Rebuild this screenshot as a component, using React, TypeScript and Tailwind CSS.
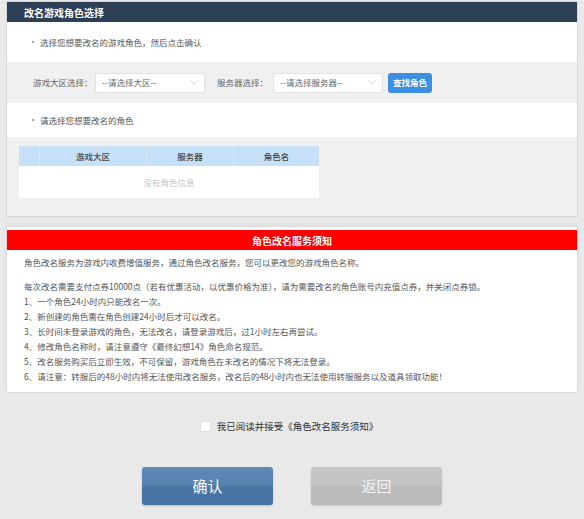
const NOTICE_ITEMS = [
  '1、一个角色24小时内只能改名一次。',
  '2、新创建的角色需在角色创建24小时后才可以改名。',
  '3、长时间未登录游戏的角色，无法改名，请登录游戏后，过1小时左右再尝试。',
  '4、修改角色名称时，请注意遵守《最终幻想14》角色命名规范。',
  '5、改名服务购买后立即生效，不可保留，游戏角色在未改名的情况下将无法登录。',
  '6、请注意：转服后的48小时内将无法使用改名服务，改名后的48小时内也无法使用转服服务以及道具领取功能！',
]

function Bullet({ children }: { children: React.ReactNode }) {
  return (
    <div className="flex items-center gap-[6px] pl-[25px] text-[8.5px] text-[#555]">
      <span className="w-[2px] h-[2px] rounded-full bg-[#888]" />
      <span>{children}</span>
    </div>
  )
}

function Select({ placeholder }: { placeholder: string }) {
  return (
    <div className="w-[110px] h-[20px] bg-white border border-[#e2e2e2] rounded-[2px] flex items-center justify-between px-[6px] text-[8.5px] text-[#666]">
      <span>{placeholder}</span>
      <svg width="8" height="5" viewBox="0 0 8 5" fill="none">
        <path d="M0.5 0.5L4 4L7.5 0.5" stroke="#c8c8c8" strokeWidth="0.8" />
      </svg>
    </div>
  )
}

export default function App() {
  return (
    <div className="min-h-[519px] bg-[#e9e9e9] px-[6px] pt-[1px] font-['Noto_Sans_CJK_SC','Noto_Sans',sans-serif]">
      {/* role selection */}
      <div className="border border-[#d6d6d6] bg-white">
        <div className="h-[20px] bg-[#2c3f55] flex items-center pl-[17px] text-[10px] font-bold text-white">
          改名游戏角色选择
        </div>
        <div className="h-[40px] flex items-center">
          <Bullet>选择您想要改名的游戏角色，然后点击确认</Bullet>
        </div>
        <div className="h-[41px] bg-[#f0f0f0] flex items-center pl-[26px] text-[8.5px] text-[#666]">
          <span className="w-[62px]">游戏大区选择：</span>
          <Select placeholder="--请选择大区--" />
          <span className="ml-[12px] w-[56px]">服务器选择：</span>
          <Select placeholder="--请选择服务器--" />
          <button className="ml-[5px] h-[20px] px-[5px] rounded-[3px] bg-[#3c8fe2] text-white text-[8.5px] font-bold">
            查找角色
          </button>
        </div>
        <div className="h-[34px] flex items-center">
          <Bullet>请选择您想要改名的角色</Bullet>
        </div>
        <div className="bg-[#f0f0f0] pt-[9px] pb-[18px] pl-[12px]">
          <div className="w-[300px] bg-white">
            <div className="h-[20px] bg-[#c6e0f8] grid grid-cols-[21px_107px_87px_85px] text-[8.5px] font-medium text-[#444]">
              <div className="border-r border-[#d6e8f8]" />
              <div className="flex items-center justify-center border-r border-[#d6e8f8]">游戏大区</div>
              <div className="flex items-center justify-center border-r border-[#d6e8f8]">服务器</div>
              <div className="flex items-center justify-center">角色名</div>
            </div>
            <div className="h-[32px] flex items-center justify-center text-[8.5px] text-[#c4c4c4]">没有角色信息</div>
          </div>
        </div>
      </div>

      {/* notice */}
      <div className="mt-[9px] border border-[#dcdcdc] bg-white pt-[3px] shadow-[0_-2px_4px_rgba(0,0,0,0.04)]">
        <div className="h-[20px] bg-[#ff0000] flex items-center justify-center text-[10px] font-bold text-white">
          角色改名服务须知
        </div>
        <div className="pt-[5px] pb-[8px] pl-[17px] text-[8.5px] leading-[15px] text-[#555]">
          <p className="mb-[9px]">角色改名服务为游戏内收费增值服务，通过角色改名服务，您可以更改您的游戏角色名称。</p>
          <p>每次改名需要支付点券10000点（若有优惠活动，以优惠价格为准），请为需要改名的角色账号内充值点券，并关闭点券锁。</p>
          {NOTICE_ITEMS.map((item) => (
            <p key={item}>{item}</p>
          ))}
        </div>
      </div>

      {/* agreement */}
      <label className="mt-[26px] flex items-center justify-center gap-[6px] text-[9.5px] text-[#333] pr-[6px]">
        <span className="w-[11px] h-[11px] bg-white border border-[#dedede] rounded-[1px]" />
        <span>我已阅读并接受《角色改名服务须知》</span>
      </label>

      <div className="mt-[34px] flex justify-center gap-[38px]">
        <button className="w-[131px] h-[38px] rounded-[3px] bg-[linear-gradient(#6189b5_0%,#5782b0_48%,#4a76a6_52%,#4672a3_100%)] shadow-[0_1px_2px_rgba(0,0,0,0.2)] text-white text-[15px]">
          确认
        </button>
        <button className="w-[131px] h-[38px] rounded-[3px] bg-[linear-gradient(#c6c6c6_0%,#c3c3c3_48%,#bcbcbc_52%,#b9b9b9_100%)] shadow-[0_1px_2px_rgba(0,0,0,0.15)] text-[#f2f2f2] text-[15px]">
          返回
        </button>
      </div>
    </div>
  )
}
